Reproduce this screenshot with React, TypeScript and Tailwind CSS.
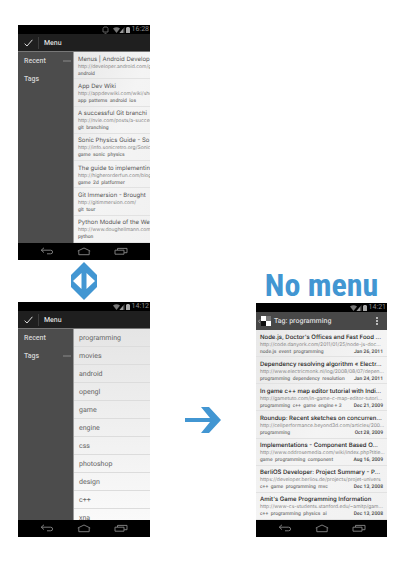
import type { ReactNode } from "react";

type Bookmark = { title: string; url: string; tags: string; date?: string };

const recent: Bookmark[] = [
  { title: "Menus | Android Develop", url: "http://developer.android.com/g", tags: "android" },
  { title: "App Dev Wiki", url: "http://appdevwiki.com/wiki/sho", tags: "app  patterns  android  ios" },
  { title: "A successful Git branchi", url: "http://nvie.com/posts/a-succes", tags: "git  branching" },
  { title: "Sonic Physics Guide - So", url: "http://info.sonicretro.org/Sonic", tags: "game  sonic  physics" },
  { title: "The guide to implementin", url: "http://higherorderfun.com/blog", tags: "game  2d  platformer" },
  { title: "Git Immersion - Brought", url: "http://gitimmersion.com/", tags: "git  tour" },
  { title: "Python Module of the We", url: "http://www.doughellmann.com", tags: "python" },
];

const tagNames = ["programming", "movies", "android", "opengl", "game", "engine", "css", "photoshop", "design", "c++", "xna"];

const tagged: Bookmark[] = [
  { title: "Node.js, Doctor's Offices and Fast Food ...", url: "http://code.danyork.com/2011/01/25/node-js-doc...", tags: "node.js  event  programming", date: "Jan 26, 2011" },
  { title: "Dependency resolving algorithm « Electr...", url: "http://www.electricmonk.nl/log/2008/08/07/depen...", tags: "programming  dependency  resolution", date: "Jan 24, 2011" },
  { title: "In game c++ map editor tutorial with Indi...", url: "http://gametuto.com/in-game-c-map-editor-tutori...", tags: "programming  c++  game  engine + 3", date: "Dec 21, 2009" },
  { title: "Roundup: Recent sketches on concurren...", url: "http://cellperformance.beyond3d.com/articles/200...", tags: "programming", date: "Oct 28, 2009" },
  { title: "Implementations - Component Based O...", url: "http://www.oddrosemedia.com/wiki/index.php?title...", tags: "game  programming  component", date: "Aug 16, 2009" },
  { title: "BerliOS Developer: Project Summary - P...", url: "https://developer.berlios.de/projects/projet-univers", tags: "c++  game  programming  mvc", date: "Dec 13, 2008" },
  { title: "Amit's Game Programming Information", url: "http://www-cs-students.stanford.edu/~amitp/gam...", tags: "c++  programming  physics  ai", date: "Dec 13, 2008" },
];

function StatusBar({ time, alarm = false }: { time: string; alarm?: boolean }) {
  return (
    <div className="flex h-[9px] shrink-0 items-center justify-end bg-black pr-px text-[7px] leading-[9px] text-[#8c8c8c]">
      {alarm && (
        <svg className="mr-1 h-2 w-[7px]" viewBox="0 0 7 8" fill="none" stroke="#777" strokeWidth="0.8">
          <path d="M1 6V2.5L2 1h3l1 1.5V6zM2.5 7.3h2" />
        </svg>
      )}
      <svg className="mr-0.5 h-2 w-[17px]" viewBox="0 0 17 8">
        <path d="M0 2.5Q3.5 0 7 2.5L3.5 7z" fill="#777" />
        <path d="M11.5 1v6H6.5z" fill="#555" />
        <path d="M10 3v4H6.5z" fill="#999" />
        <path d="M13 1.6h1V1h2v.6h1V7h-4z" fill="#aaa" />
      </svg>
      <time>{time}</time>
    </div>
  );
}

function NavBar() {
  const button = "flex h-[17px] w-5 items-center justify-center";
  return (
    <nav className="flex h-[17px] shrink-0 items-center justify-center gap-[17px] bg-black">
      <button aria-label="Back" className={button}>
        <svg className="h-[9px] w-3.5" viewBox="0 0 14 9" fill="none" stroke="#888" strokeWidth="0.9">
          <path d="M4 .8L1.2 3.2 4 5.6M1.4 3.2h9.2q2 0 2 1.8t-2 1.8H7" />
        </svg>
      </button>
      <button aria-label="Home" className={button}>
        <svg className="h-[9px] w-3.5" viewBox="0 0 14 9" fill="none" stroke="#888" strokeWidth="0.9">
          <path d="M.8 4L7 1l6.2 3M1.8 3.8v3.9h10.4V3.8" />
        </svg>
      </button>
      <button aria-label="Recent apps" className={button}>
        <svg className="h-[9px] w-3.5" viewBox="0 0 14 9" fill="none" stroke="#888" strokeWidth="0.9">
          <path d="M1 3.2h9v4H1zM3.5 3V1.4H13v4.3h-2.8" />
        </svg>
      </button>
    </nav>
  );
}

function MenuBar() {
  return (
    <header className="flex h-[18px] shrink-0 items-center border-b border-[#777] bg-[#1f1f1f] text-[#ddd]">
      <button aria-label="Done" className="flex h-3 w-[21px] items-center justify-center border-r border-[#3c3c3c]">
        <svg className="h-2 w-[9px]" viewBox="0 0 9 8" fill="none" stroke="#ddd" strokeWidth="1">
          <path d="M.6 4.7L3 7 8.4.8" />
        </svg>
      </button>
      <h2 className="pl-[5px] text-[7px] font-medium leading-2">Menu</h2>
    </header>
  );
}

function Sidebar({ active }: { active: string }) {
  return (
    <aside className="flex w-14 shrink-0 flex-col border-r border-[#9a9a9a] bg-[#4c4c4c]">
      {["Recent", "Tags"].map((name) => (
        <button key={name} className="flex h-[18px] items-center justify-between pl-1.5 pr-0.5 text-[7px] font-medium text-[#d6d6d6]">
          {name}
          {name === active && <span className="h-0.5 w-2 bg-[#6b6b6b]" />}
        </button>
      ))}
    </aside>
  );
}

function BookmarkList({ items, muted = false }: { items: Bookmark[]; muted?: boolean }) {
  return (
    <ul className="flex min-w-0 flex-1 flex-col overflow-hidden bg-linear-to-br from-[#e8e8e8] via-[#f4f4f4] to-[#f1f1f1]">
      {items.map((item) => (
        <li key={item.title} className="flex flex-1 flex-col justify-center overflow-hidden whitespace-pre border-b border-[#e2e2e2] px-1 pt-0.5">
          <a href="#" className={`font-['Inter',sans-serif] text-[6px] leading-[9px] ${muted ? "text-[#555]" : "font-medium text-[#222]"}`}>
            {item.title}
          </a>
          <span className="font-['Inter',sans-serif] text-[5px] leading-[7px] text-[#888]">{item.url}</span>
          <span className="flex justify-between text-[5px] font-medium leading-[7px] text-[#777]">
            <span>{item.tags}</span>
            {item.date && <time className="text-[#444]">{item.date}</time>}
          </span>
        </li>
      ))}
    </ul>
  );
}

function Phone({ height = "h-[235px]", children }: { height?: string; children: ReactNode }) {
  return <section className={`flex flex-col overflow-hidden bg-black ${height}`}>{children}</section>;
}

export default function App() {
  return (
    <main className="flex items-end bg-white pt-[25px] pl-[18px] font-['Roboto',sans-serif] [text-rendering:geometricPrecision]">
      <div className="flex w-33 flex-col">
        <Phone>
          <StatusBar time="16:28" alarm />
          <MenuBar />
          <div className="flex min-h-0 flex-1">
            <Sidebar active="Recent" />
            <BookmarkList items={recent} muted />
          </div>
          <NavBar />
        </Phone>
        <div className="flex h-[42px] items-center justify-center">
          <svg className="h-[38px] w-[26px]" viewBox="0 0 26 38" role="img" aria-label="Switches between">
            <path d="M13 0L26 13v12L13 38 0 25V13z" fill="#4296d2" />
            <path d="M10.5 11v16L2 19zM15.5 11v16l8.5-8z" fill="white" />
          </svg>
        </div>
        <Phone>
          <StatusBar time="14:12" />
          <MenuBar />
          <div className="flex min-h-0 flex-1">
            <Sidebar active="Tags" />
            <ul className="min-w-0 flex-1 overflow-hidden bg-linear-to-b from-[#e5e5e5] to-[#fafafa]">
              {tagNames.map((tag) => (
                <li key={tag} className="flex h-[18px] items-center border-b border-[#dcdcdc] pl-[5px]">
                  <a href="#" className="text-[7px] leading-2 text-[#666]">{tag}</a>
                </li>
              ))}
            </ul>
          </div>
          <NavBar />
        </Phone>
      </div>
      <div className="flex h-[235px] flex-1 items-center justify-center">
        <svg className="h-[26px] w-9" viewBox="0 0 36 26" role="img" aria-label="Leads to">
          <path d="M0 11h25L16 0h8l12 13-12 13h-8l9-11H0z" fill="#4296d2" />
        </svg>
      </div>
      <div className="mr-[19px] w-[131px]">
        <h1 className="mb-0.5 whitespace-nowrap text-center font-['Roboto_Condensed','Liberation_Sans_Narrow',sans-serif] text-[32px] font-bold leading-8 text-[#4296d2] [text-rendering:auto]">
          No menu
        </h1>
        <Phone height="h-[234px]">
          <StatusBar time="14:21" />
          <header className="flex h-[18px] shrink-0 items-center bg-[#484848] px-0.5 text-[#ddd]">
            <button aria-label="Up" className="flex items-center">
              <svg className="h-3 w-3.5" viewBox="0 0 14 12">
                <path d="M2 4.5L.6 6.2 2 8" fill="none" stroke="#bbb" strokeWidth="0.7" />
                <path d="M3 1h5v5H3zM8 6h5v5H8z" fill="#fff" />
                <path d="M3 6h5v5H3z" fill="#111" />
                <path d="M8 1h5v5H8z" fill="#777" />
              </svg>
            </button>
            <h2 className="flex-1 pl-0.5 text-[7px] font-medium leading-2">Tag: programming</h2>
            <button aria-label="More options" className="flex w-4 flex-col items-center gap-px">
              <span className="size-0.5 bg-[#bbb]" />
              <span className="size-0.5 bg-[#bbb]" />
              <span className="size-0.5 bg-[#bbb]" />
            </button>
          </header>
          <BookmarkList items={tagged} />
          <NavBar />
        </Phone>
      </div>
    </main>
  );
}
